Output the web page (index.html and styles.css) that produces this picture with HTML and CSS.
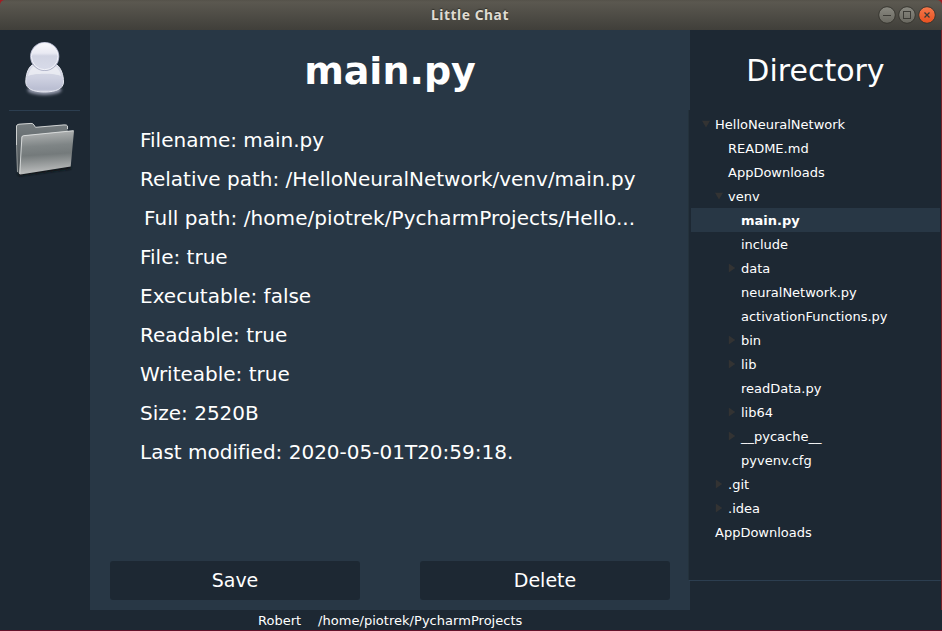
FILE: index.html
```html
<!DOCTYPE html>
<html lang="en">
<head>
<meta charset="utf-8">
<title>Little Chat</title>
<link rel="stylesheet" href="styles.css">
</head>
<body>
<div class="window">
  <header class="titlebar">
    <span class="window-title">Little Chat</span>
    <div class="controls">
      <svg width="60" height="22" viewBox="0 0 60 22">
        <defs>
          <linearGradient id="btn" x1="0" y1="0" x2="0" y2="1"><stop offset="0" stop-color="#8a8981"/><stop offset="1" stop-color="#68675f"/></linearGradient>
          <linearGradient id="close" x1="0" y1="0" x2="0" y2="1"><stop offset="0" stop-color="#f6794c"/><stop offset="1" stop-color="#e8501f"/></linearGradient>
        </defs>
        <g stroke="#373630" stroke-width="1">
          <circle cx="10" cy="11" r="8.3" fill="url(#btn)"/>
          <circle cx="30" cy="11" r="8.3" fill="url(#btn)"/>
          <circle cx="50" cy="11" r="8.3" fill="url(#close)"/>
        </g>
        <g fill="none" stroke="#3c3b36">
          <path d="M6 11.500h8"/>
          <rect x="26.500" y="7.500" width="7" height="7"/>
          <path d="M47.500 8.500l5 5m0-5l-5 5" stroke-width="1.300"/>
        </g>
      </svg>
    </div>
  </header>
  <div class="body">
    <nav class="rail">
      <svg class="user" width="50" height="72" viewBox="0 0 50 72">
        <defs>
          <linearGradient id="head" x1="0" y1="0" x2="0" y2="1"><stop offset="0" stop-color="#fafafd"/><stop offset=".38" stop-color="#e9eaf3"/><stop offset=".48" stop-color="#d1d4e3"/><stop offset="1" stop-color="#d8dbe9"/></linearGradient>
          <linearGradient id="torso" x1="0" y1="0" x2="0" y2="1"><stop offset="0" stop-color="#dcdeea"/><stop offset=".5" stop-color="#cdd0e0"/><stop offset=".9" stop-color="#babed2"/><stop offset="1" stop-color="#d5d7e4"/></linearGradient>
          <filter id="soft" x="-20%" y="-80%" width="140%" height="260%"><feGaussianBlur stdDeviation="1.500"/></filter>
        </defs>
        <ellipse cx="24.500" cy="60" rx="17" ry="5" fill="#9196a8" filter="url(#soft)"/>
        <path d="M12 35C8 38 5.800 45 5.800 52C5.800 58.500 13 62 24.500 62S43.500 58.500 43.500 52C43.500 45 41 38 37 35Z" fill="url(#torso)" stroke="#e6e8f1"/>
        <path d="M8 46C14 43 35 43 41 46C40 41 38 38 35 36H14C11 38 9 42 8 46Z" fill="#eff0f6" opacity=".75"/>
        <circle cx="24.700" cy="26.500" r="14" fill="url(#head)" stroke="#aeb2c7" stroke-width="1.200"/>
        <circle cx="24.700" cy="26.400" r="13.300" fill="none" stroke="#f3f4fa"/>
      </svg>
      <div class="rail-line"></div>
      <svg class="folder" width="66" height="60" viewBox="0 0 66 60">
        <defs>
          <linearGradient id="back" x1="0" y1="0" x2="0" y2="1"><stop offset="0" stop-color="#767d80"/><stop offset="1" stop-color="#454c50"/></linearGradient>
          <linearGradient id="front" x1="0" y1="0" x2=".08" y2="1"><stop offset="0" stop-color="#b9bbbb"/><stop offset=".38" stop-color="#7f8586"/><stop offset=".58" stop-color="#747a7b"/><stop offset=".95" stop-color="#b5b7b7"/></linearGradient>
          <filter id="shade" x="-10%" y="-10%" width="120%" height="130%"><feGaussianBlur stdDeviation="1"/></filter>
        </defs>
        <path d="M5 53L59 46V49L7 56Z" fill="#101518" filter="url(#shade)"/>
        <path d="M4.500 5.500Q5 4 7 4L19 3.200Q21 3 22 5L23.500 7.300L52 4.800Q55 4.500 55.500 6L56 20L8 54L5 52Z" fill="url(#back)"/>
        <path d="M4.500 25V6Q5 4.300 7 4.200L19 3.400Q21 3.200 22 5L23.500 7.300L52 4.900Q55 4.700 55.500 6V9" fill="none" stroke="#dcdfdf" stroke-width=".9"/>
        <path d="M4.500 25L5.500 52" fill="none" stroke="#a4a9aa" stroke-width=".8"/>
        <path d="M11.500 15.500L61.500 10.500Q62 10.500 62 11L58.700 46.500L8.500 54.500Q7.300 54.500 7.400 53L9.500 17Q9.700 15.700 11.500 15.500Z" fill="url(#front)"/>
        <path d="M7.700 54L9.900 17Q10 16 11.500 15.700L61.500 10.700" fill="none" stroke="#e6e8e8" stroke-width=".8"/>
      </svg>
    </nav>
    <main class="panel">
      <h1>main.py</h1>
      <div class="details">
        <p>Filename: main.py</p>
        <p>Relative path: /HelloNeuralNetwork/venv/main.py</p>
        <p class="full">Full path: /home/piotrek/PycharmProjects/Hello...</p>
        <p>File: true</p>
        <p>Executable: false</p>
        <p>Readable: true</p>
        <p>Writeable: true</p>
        <p>Size: 2520B</p>
        <p>Last modified: 2020-05-01T20:59:18.</p>
      </div>
      <div class="actions"><button>Save</button><button>Delete</button></div>
    </main>
    <aside class="directory">
      <h2>Directory</h2>
      <ul class="tree">
        <li class="l0 open">HelloNeuralNetwork</li>
        <li class="l1">README.md</li>
        <li class="l1">AppDownloads</li>
        <li class="l1 open">venv</li>
        <li class="l2 selected">main.py</li>
        <li class="l2">include</li>
        <li class="l2 closed">data</li>
        <li class="l2">neuralNetwork.py</li>
        <li class="l2">activationFunctions.py</li>
        <li class="l2 closed">bin</li>
        <li class="l2 closed">lib</li>
        <li class="l2">readData.py</li>
        <li class="l2 closed">lib64</li>
        <li class="l2 closed">__pycache__</li>
        <li class="l2">pyvenv.cfg</li>
        <li class="l1 closed">.git</li>
        <li class="l1 closed">.idea</li>
        <li class="l0">AppDownloads</li>
      </ul>
    </aside>
  </div>
  <footer class="status"><span>Robert</span><span class="path">/home/piotrek/PycharmProjects</span></footer>
</div>
</body>
</html>
```
FILE: styles.css
```css
* { box-sizing: border-box; margin: 0; padding: 0; }
body {
  width: 942px;
  height: 631px;
  overflow: hidden;
  background: #7a1420;
  font-family: "DejaVu Sans", sans-serif;
  font-variant-ligatures: none;
  color: #fff;
}
.window {
  display: flex;
  flex-direction: column;
  width: 942px;
  height: 631px;
  border-bottom: 1px solid #64122a;
  background: linear-gradient(#a31c22 10px, #1d2833 10px);
}
.titlebar {
  display: grid;
  grid-template-columns: 1fr auto 1fr;
  align-items: center;
  height: 30px;
  border-radius: 5px 5px 0 0;
  background: linear-gradient(#55524a, #5b5850 2px, #403f3a);
}
.window-title {
  grid-column: 2;
  margin-right: 2px;
  font: bold 13.800px/30px "Noto Sans", sans-serif;
  letter-spacing: .55px;
  color: #dfdbd2;
  text-shadow: 0 -1px 1px #302f2a;
}
.controls {
  display: flex;
  justify-content: flex-end;
  padding-right: 5px;
}
.body {
  display: grid;
  grid-template-columns: 90px 600px 252px;
  height: 580px;
}
.rail {
  display: flex;
  flex-direction: column;
  align-items: center;
  padding-right: 1px;
}
.user { margin-bottom: 8px; margin-left: 1px; }
.rail-line { width: 71px; height: 1px; background: #2c3e50; }
.folder { margin-top: 9px; }
.panel {
  display: flex;
  flex-direction: column;
  padding: 16px 20px 10px;
  background: #283745;
}
h1 {
  font-size: 38px;
  line-height: 50px;
  text-align: center;
}
.details { padding: 25px 30px 0; }
.details p {
  height: 39px;
  font-size: 20px;
  line-height: 39px;
  white-space: nowrap;
}
.details .full { padding-left: 4px; letter-spacing: .06px; }
.actions { display: flex; gap: 60px; margin-top: auto; }
button {
  width: 250px;
  height: 39px;
  border: 0;
  border-radius: 3px;
  background: #1d2833;
  color: #fff;
  font: 19px/39px "DejaVu Sans", sans-serif;
}
.directory { border-right: 1px solid #7a2027; }
h2 {
  height: 80px;
  font-size: 30px;
  font-weight: normal;
  line-height: 82px;
  text-align: center;
}
.tree {
  height: 471px;
  margin-left: -2px;
  padding: 2px 1px 0 2px;
  border-left: 1px solid #24323c;
  border-bottom: 1px solid #2c3e50;
  background: #1d2833;
  list-style: none;
}
.tree li {
  display: flex;
  align-items: center;
  height: 24px;
  font-size: 13px;
  white-space: nowrap;
}
.tree li::before {
  content: "";
  width: 8px;
  height: 9px;
  margin-right: 5px;
}
.l0 { padding-left: 11px; }
.l1 { padding-left: 24px; }
.l2 { padding-left: 37px; }
.tree .open::before { background: #333; clip-path: polygon(0 15%, 100% 15%, 50% 90%); }
.tree .closed::before { background: #333; clip-path: polygon(10% 0, 90% 50%, 10% 100%); }
.tree .selected { background: #283745; font-weight: bold; }
.status {
  display: flex;
  gap: 17px;
  height: 20px;
  padding-left: 258px;
  font-size: 13px;
  line-height: 22px;
}
.path { letter-spacing: .03px; }
```
